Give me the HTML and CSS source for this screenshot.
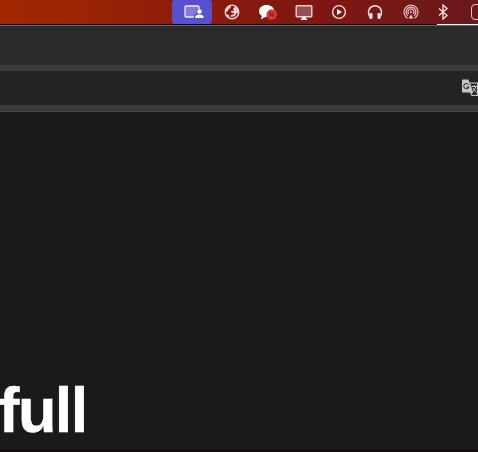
FILE: index.html
```html
<!DOCTYPE html>
<html lang="en">
<head>
<meta charset="utf-8">
<title>Desktop</title>
<link rel="stylesheet" href="styles.css">
</head>
<body>
<header class="menubar">
  <span class="item sharing"><svg width="20" height="16" viewBox="0 0 20 16"><rect x="1" y="2" width="14" height="11" rx="1" fill="#8579df" stroke="#eeeaff" stroke-width="1.3"/><path d="M10 14v-2.5q1-2 2.5-2V5h6v5h1v4z" fill="#5950ce"/><circle cx="15.5" cy="7.5" r="2.3" fill="#fff"/><path d="M11.3 14v-1.2q.3-2 4.2-2.2 3.6.2 4 2.2V14z" fill="#fff"/></svg></span>
  <span class="item globe"><svg width="16" height="16" viewBox="0 0 16 16"><circle cx="8" cy="8" r="6.8" fill="none" stroke="#f4d8d5" stroke-width="1.3"/><path d="M2 5 4.5 2.5 7 1.5 6.5 4 4.5 5 4 7 2 8zM9 5l2-2.5L14 5l.5 4-2.5.5L11 12l-4 1-.5-1.5L10 10V8.7H7.5L7 7h3zM3 10l2 1.5.5 2L3 12z" fill="#f4d8d5"/></svg></span>
  <span class="item chat"><svg width="19" height="17" viewBox="0 0 19 17"><path d="M8.5 1C4.5 1 1 3.4 1 7c0 2.3 1 3.8 2.8 4.8L3 15.2 7.5 13l6-2 3-4C16 3.2 12.5 1 8.5 1z" fill="#fff"/><circle cx="13.7" cy="10.5" r="5.2" fill="#d63b32"/><path d="M12 12.5v-4l3 4v-4" fill="none" stroke="#70201d" stroke-width="1"/></svg></span>
  <span class="item monitor"><svg width="18" height="16" viewBox="0 0 18 16"><rect x="1.2" y="1.7" width="15.6" height="11" rx=".8" fill="#985054" stroke="#efced0" stroke-width="1.4"/><path d="M7 13h4v1.7h1.2V16H5.8v-1.3H7z" fill="#fff"/></svg></span>
  <span class="item play"><svg width="16" height="16" viewBox="0 0 16 16"><circle cx="8" cy="8" r="6.4" fill="none" stroke="#f8dfdd" stroke-width="1.4"/><path d="M6 5v6l5-3z" fill="#fff"/></svg></span>
  <span class="item phones"><svg width="16" height="16" viewBox="0 0 16 16"><path d="M3.2 13.5C1.8 12 1.5 10.2 1.5 8a6.5 6.2 0 0 1 13 0c0 2.2-.3 4-1.7 5.5" fill="none" stroke="#f8e2e1" stroke-width="1.5"/><rect x="2.5" y="9" width="3" height="6" rx="1" fill="#f8e2e1"/><rect x="10.5" y="9" width="3" height="6" rx="1" fill="#f8e2e1"/></svg></span>
  <span class="item airdrop"><svg width="16" height="16" viewBox="0 0 16 16" fill="none" stroke="#edcbd0" stroke-width="1.15"><path d="M4.6 14.2A7 7 0 1 1 11.4 14.2M4.8 11.7a4.9 4.9 0 1 1 6.4 0M5.9 9.9a2.9 2.9 0 1 1 4.2 0"/><circle cx="8" cy="8" r="1" fill="#edcbd0" stroke="none"/><path d="M8 10.5 10.5 14.5H5.5z" fill="#edcbd0" stroke="none"/></svg></span>
  <span class="item bluetooth"><svg width="12" height="16" viewBox="0 0 12 16"><path d="m2 4.5 8 7L6 15V1l4 3.5-8 7" fill="none" stroke="#f5dfe1" stroke-width="1.35"/></svg></span>
  <span class="item battery"></span>
</header>
<div class="edge"><span class="edge-light"></span></div>
<div class="tabs"></div>
<div class="toolbar"><svg width="17" height="20" viewBox="0 0 17 20"><path d="M2 1.5h5.5l4 13H2q-1 0-1-1v-11q0-1 1-1z" fill="#c6c8c8"/><path d="M8.5 5H16.5v12.5H11l-1.5-3h2z" fill="#292b2a" stroke="#c6c8c8" stroke-width="1.1"/><path d="M7.5 6.7A2.6 2.6 0 1 0 7.8 9H5.5" fill="none" stroke="#333" stroke-width="1.1"/><path d="M10.5 8.5H16M13.3 7V8.5M15 8.5q-.8 3.5-3.5 5M12 10l3.5 4.5" fill="none" stroke="#c6c8c8"/></svg></div>
<div class="divider"></div>
<main class="page"><h1>full</h1></main>
<div class="bottom"></div>
</body>
</html>
```
FILE: styles.css
```css
* { box-sizing: border-box; }
body {
  margin: 0;
  width: 478px;
  height: 452px;
  display: flex;
  flex-direction: column;
  overflow: hidden;
  background: #1a1a1a;
}
svg { display: block; flex: none; }
.menubar {
  height: 24px;
  flex: none;
  display: flex;
  padding-left: 172px;
  overflow: hidden;
  background: linear-gradient(90deg, #9f2600 0, #9b2403 80px, #8d1d0a 180px, #831810 270px, #7a1715 370px, #69191c 478px);
}
.item {
  display: flex;
  flex: none;
  align-items: center;
  justify-content: center;
  height: 24px;
}
.sharing { width: 40px; border-radius: 3px; background: #5950ce; padding-left: 3px; }
.globe { width: 40px; }
.chat { width: 32px; padding-right: 1px; }
.monitor { width: 40px; }
.play { width: 30px; }
.phones { width: 42px; }
.airdrop { width: 29px; }
.bluetooth { width: 36px; }
.battery {
  width: 24px;
  height: 16px;
  margin: 4px 0 0 10px;
  border: 1px solid #e2c5c8;
  border-radius: 4px;
}
.edge {
  height: 2px;
  flex: none;
  display: flex;
  justify-content: flex-end;
  background: #080606;
  border-bottom: 1px solid #656363;
}
.edge-light { width: 41px; height: 1px; background: #fff; }
.tabs {
  height: 45px;
  flex: none;
  background: #2a2a2a;
  border-bottom: 6px solid #3c3c3c;
}
.toolbar {
  height: 34px;
  flex: none;
  display: flex;
  justify-content: flex-end;
  align-items: center;
  background: #242424;
}
.divider {
  height: 7px;
  flex: none;
  background: #3b3b3b;
  border-bottom: 1px solid #484848;
}
.page {
  flex: 1;
  display: flex;
  align-items: flex-end;
  background: #1a1a1a;
}
h1 {
  margin: 0 0 4px -1.5px;
  font: bold 63px/70px "Liberation Sans", Arial, sans-serif;
  letter-spacing: -1.6px;
  color: #fff;
  -webkit-text-stroke: .4px #fff;
}
.bottom { height: 3px; flex: none; background: #151014; }
```
